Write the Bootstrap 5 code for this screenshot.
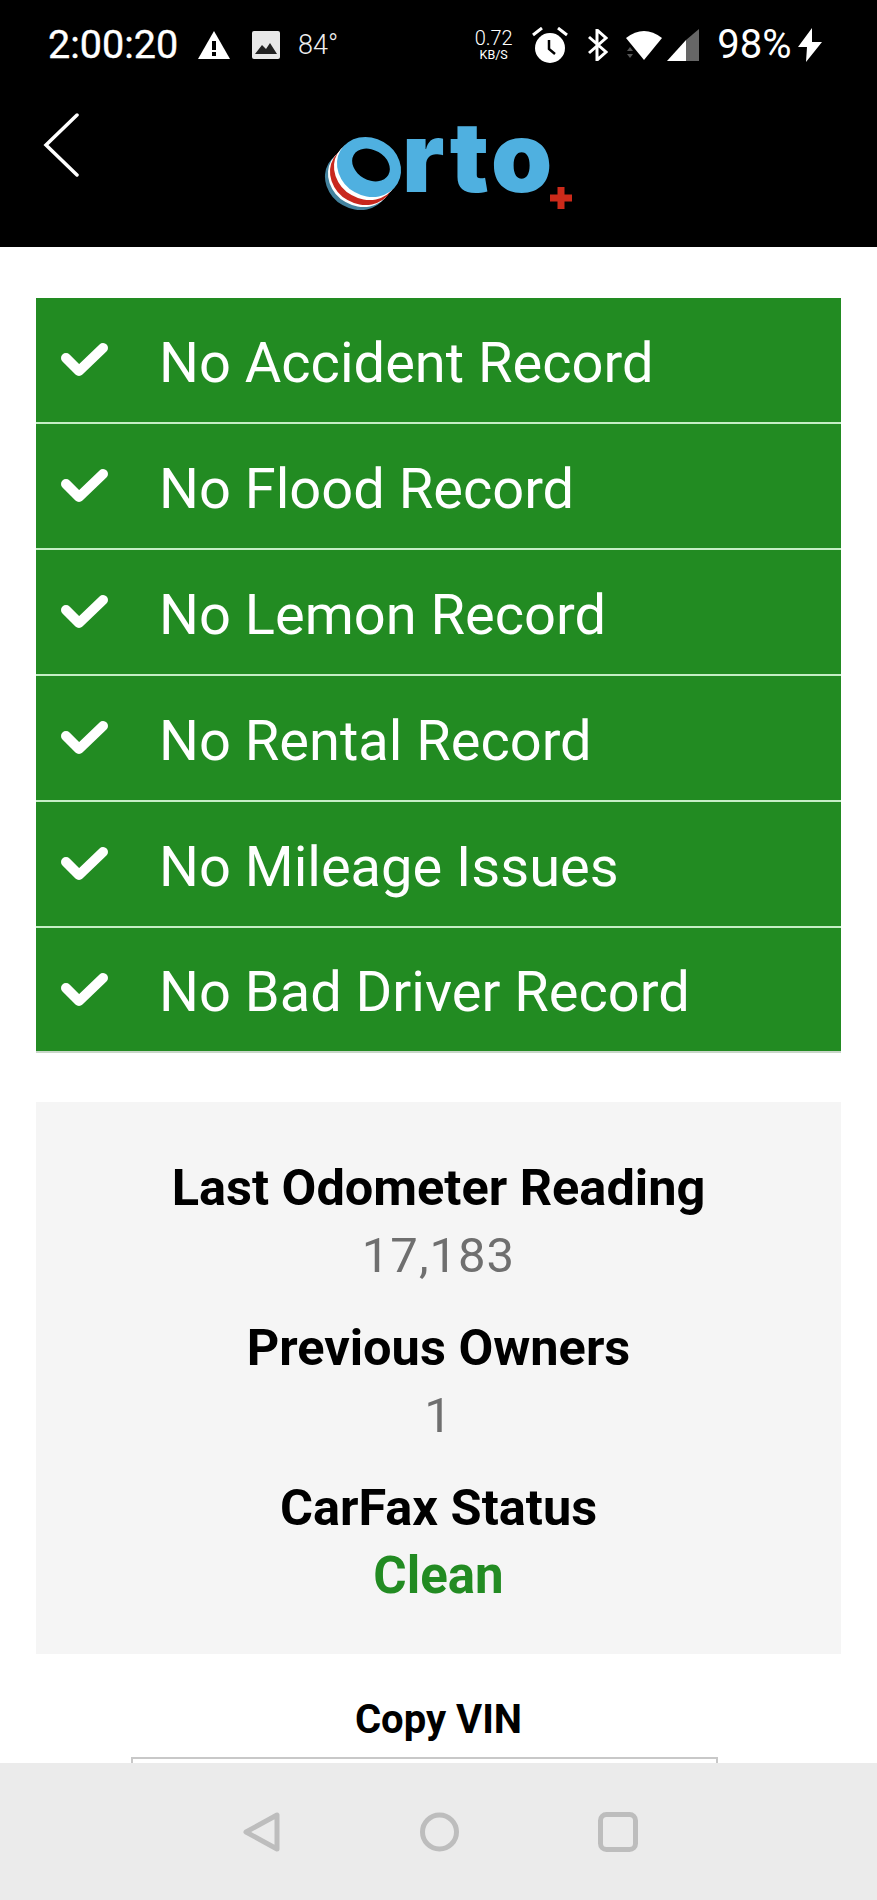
<!DOCTYPE html>
<html lang="en">
<head>
    <meta charset="UTF-8">
    <title>Orto</title>
    <link href="https://cdn.jsdelivr.net/npm/bootstrap@5.3.0/dist/css/bootstrap.min.css" rel="stylesheet">
    <style>
        body { font-family: Roboto, "Liberation Sans", sans-serif; width: 877px; height: 1900px; overflow: hidden; position: relative; background: #fff; }
        .app-head { background: #000; height: 247px; color: #fff; }
        .status-row { height: 90px; padding-left: 48px; }
        .clock { font-size: 39.5px; font-weight: 400; line-height: 1; width: 128px; -webkit-text-stroke: .4px #fff; }
        .temp { font-size: 27px; font-weight: 300; line-height: 1; margin-left: 18px; color: #eee; }
        .speed { width: 39px; margin-left: 136px; text-align: center; font-weight: 300; }
        .speed-num { font-size: 20px; line-height: 19px; display: block; }
        .speed-unit { font-size: 12.5px; line-height: 13px; font-weight: 400; display: block; }
        .batt { font-size: 40px; font-weight: 400; line-height: 1; margin-left: 18px; width: 73px; }
        .ic-warn { margin-left: 22px; }
        .ic-img { margin-left: 22px; }
        .ic-alarm { margin-left: 19px; }
        .ic-bt { margin-left: 20px; }
        .ic-wifi { margin-left: 18px; }
        .ic-signal { margin-left: 5px; }
        .ic-bolt { margin-left: 8px; }
        .tool-row { height: 157px; }
        .back-btn { margin-left: 43px; margin-top: 23px; }
        .brand-box { margin-left: 221px; }
        .brand-txt { font-family: Inter, Roboto, sans-serif; font-weight: 900; font-size: 98px; letter-spacing: 3px; fill: #4fb0e0; }
        .page-body { padding: 51px 36px 0; }
        .rec-list { border-radius: 0; }
        .rec-item { background: #228b22; color: #fff; height: 126px; border: 0; border-bottom: 2px solid #c6efc6; border-radius: 0; font-size: 56px; line-height: 1; padding: 5px 0 0 123px; display: flex; align-items: center; position: relative; }
        .rec-item:last-child { border-bottom-color: #c9d6c9; height: 125px; }
        .rec-check { position: absolute; left: 25px; top: 43px; }
        .stat-panel { background: #f5f5f5; margin-top: 49px; height: 552px; padding-top: 58px; text-align: center; }
        .stat-label { font-size: 50.5px; font-weight: 700; line-height: 56px; color: #000; }
        .stat-value { font-size: 49px; line-height: 56px; color: #6f6f6f; margin-top: 12px; margin-bottom: 36px; letter-spacing: 1px; }
        .stat-good { color: #228b22; font-weight: 700; font-size: 51px; letter-spacing: 0; margin-bottom: 0; }
        .vin-label { font-size: 40px; font-weight: 700; line-height: 44px; text-align: center; margin-top: 44px; color: #000; }
        .vin-input { margin: 15px 123px 0 95px; height: 80px; border: 2px solid #c8c8c8; background: #fff; }
        .nav-bottom { position: absolute; left: 0; right: 0; bottom: 0; height: 137px; background: #ebebeb; padding-top: 49px; }
        .nav-back { margin-left: 243px; }
        .nav-home { margin-left: 140px; }
        .nav-recent { margin-left: 139px; }
    </style>
</head>
<body>
<div class="app-head">
    <div class="status-row d-flex align-items-center">
        <span class="clock">2:00:20</span>
        <svg class="ic-warn" width="32" height="28" viewBox="0 0 32 28"><path d="M16 0 L32 28 H0 Z" fill="#fff"/><rect x="14" y="10" width="4" height="9" fill="#000"/><rect x="14" y="21" width="4" height="4" fill="#000"/></svg>
        <svg class="ic-img" width="28" height="28" viewBox="0 0 28 28"><rect width="28" height="28" rx="2" fill="#e8e8e8"/><path d="M3 23 L10 14 L14 18 L18 12 L25 23 Z" fill="#222"/></svg>
        <span class="temp">84°</span>
        <div class="speed"><span class="speed-num">0.72</span><span class="speed-unit">KB/S</span></div>
        <svg class="ic-alarm" width="36" height="36" viewBox="0 0 36 36"><circle cx="18" cy="21" r="15" fill="#fff"/><path d="M1 8 L10 1 M35 8 L26 1" stroke="#fff" stroke-width="3"/><path d="M17 13 V22 L23 27" stroke="#000" stroke-width="2.5" fill="none"/></svg>
        <svg class="ic-bt" width="20" height="32" viewBox="0 0 20 32"><path d="M1 8 L18 23 L9 31 V1 L18 9 L1 24" stroke="#fff" stroke-width="3" fill="none"/></svg>
        <svg class="ic-wifi" width="36" height="30" viewBox="0 0 36 30"><path d="M0 8 Q18 -6 36 8 L18 30 Z" fill="#fff"/><path d="M1 21 L4 17 L7 21 Z M1 24 L4 28 L7 24 Z" fill="#555"/></svg>
        <svg class="ic-signal" width="32" height="32" viewBox="0 0 32 32"><path d="M32 0 V32 H19 V11 Z" fill="#666"/><path d="M19 11 V32 H0 Z" fill="#fff"/></svg>
        <span class="batt">98%</span>
        <svg class="ic-bolt" width="24" height="34" viewBox="0 0 24 34"><path d="M14 0 L0 19 H9 L8 34 L24 14 H14 Z" fill="#fff"/></svg>
    </div>
    <div class="tool-row d-flex align-items-start">
        <svg class="back-btn" width="36" height="66" viewBox="0 0 36 66"><path d="M34 2 L3 32 L34 62" stroke="#fff" stroke-width="3.5" stroke-linecap="round" fill="none"/></svg>
        <svg class="brand-box" width="290" height="130" viewBox="0 -20 290 130">
            <ellipse cx="57" cy="70" rx="33" ry="29" transform="rotate(30 57 70)" fill="#43829e"/>
            <ellipse cx="60" cy="67" rx="33" ry="29" transform="rotate(30 60 67)" fill="#fff"/>
            <ellipse cx="62" cy="65" rx="33" ry="29" transform="rotate(30 62 65)" fill="#c8281e"/>
            <ellipse cx="66" cy="60" rx="33" ry="29" transform="rotate(30 66 60)" fill="#fff"/>
            <ellipse cx="69" cy="57" rx="33" ry="29" transform="rotate(30 69 57)" fill="#4fb0e0"/>
            <ellipse cx="71" cy="55" rx="20" ry="15" transform="rotate(30 71 55)" fill="#000"/>
            <text class="brand-txt" x="102" y="82">rto</text>
            <path d="M261 77 V99 M250 88 H272" stroke="#cc2a1a" stroke-width="7"/>
        </svg>
    </div>
</div>

<div class="page-body">
    <ul class="list-group rec-list">
        <li class="list-group-item rec-item"><svg class="rec-check" width="50" height="38" viewBox="0 0 50 38"><path d="M5 17 L18 30 L42 7" stroke="#fff" stroke-width="10" stroke-linecap="round" stroke-linejoin="round" fill="none"/></svg>No Accident Record</li>
        <li class="list-group-item rec-item"><svg class="rec-check" width="50" height="38" viewBox="0 0 50 38"><path d="M5 17 L18 30 L42 7" stroke="#fff" stroke-width="10" stroke-linecap="round" stroke-linejoin="round" fill="none"/></svg>No Flood Record</li>
        <li class="list-group-item rec-item"><svg class="rec-check" width="50" height="38" viewBox="0 0 50 38"><path d="M5 17 L18 30 L42 7" stroke="#fff" stroke-width="10" stroke-linecap="round" stroke-linejoin="round" fill="none"/></svg>No Lemon Record</li>
        <li class="list-group-item rec-item"><svg class="rec-check" width="50" height="38" viewBox="0 0 50 38"><path d="M5 17 L18 30 L42 7" stroke="#fff" stroke-width="10" stroke-linecap="round" stroke-linejoin="round" fill="none"/></svg>No Rental Record</li>
        <li class="list-group-item rec-item"><svg class="rec-check" width="50" height="38" viewBox="0 0 50 38"><path d="M5 17 L18 30 L42 7" stroke="#fff" stroke-width="10" stroke-linecap="round" stroke-linejoin="round" fill="none"/></svg>No Mileage Issues</li>
        <li class="list-group-item rec-item"><svg class="rec-check" width="50" height="38" viewBox="0 0 50 38"><path d="M5 17 L18 30 L42 7" stroke="#fff" stroke-width="10" stroke-linecap="round" stroke-linejoin="round" fill="none"/></svg>No Bad Driver Record</li>
    </ul>

    <div class="stat-panel">
        <div class="stat-label">Last Odometer Reading</div>
        <div class="stat-value">17,183</div>
        <div class="stat-label">Previous Owners</div>
        <div class="stat-value">1</div>
        <div class="stat-label">CarFax Status</div>
        <div class="stat-value stat-good">Clean</div>
    </div>

    <div class="vin-label">Copy VIN</div>
    <div class="vin-input"></div>
</div>

<div class="nav-bottom d-flex align-items-start">
    <svg class="nav-back" width="37" height="40" viewBox="0 0 37 40"><path d="M34 3 V37 L3 20 Z" stroke="#bdbdbd" stroke-width="5" stroke-linejoin="round" fill="none"/></svg>
    <svg class="nav-home" width="39" height="40" viewBox="0 0 39 40"><circle cx="19.500" cy="20" r="17" stroke="#bdbdbd" stroke-width="5" fill="none"/></svg>
    <svg class="nav-recent" width="40" height="40" viewBox="0 0 40 40"><rect x="2.500" y="2.500" width="35" height="35" rx="6" stroke="#bdbdbd" stroke-width="5" fill="none"/></svg>
</div>

<script src="https://cdn.jsdelivr.net/npm/bootstrap@5.3.0/dist/js/bootstrap.bundle.min.js"></script>
</body>
</html>
